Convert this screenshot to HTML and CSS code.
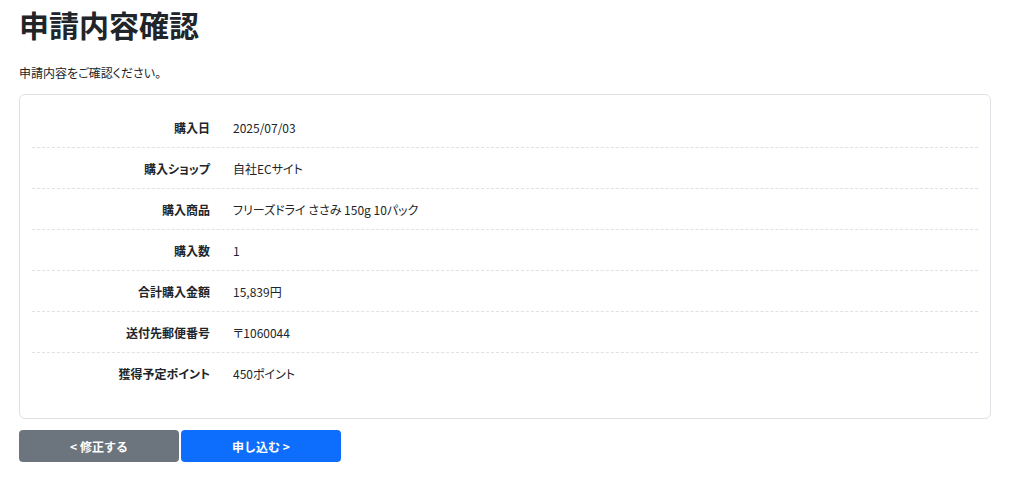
FILE: index.html
```html
<!DOCTYPE html>
<html lang="ja">
<head>
<meta charset="utf-8">
<title>申請内容確認</title>
<link rel="stylesheet" href="styles.css">
</head>
<body>
<main class="page">
  <h1 class="title">申請内容確認</h1>
  <p class="lead">申請内容をご確認ください。</p>
  <section class="card">
    <dl class="rows">
      <div class="row"><dt>購入日</dt><dd>2025/07/03</dd></div>
      <div class="row"><dt>購入ショップ</dt><dd>自社ECサイト</dd></div>
      <div class="row"><dt>購入商品</dt><dd>フリーズドライ ささみ 150g 10パック</dd></div>
      <div class="row"><dt>購入数</dt><dd>1</dd></div>
      <div class="row"><dt>合計購入金額</dt><dd>15,839円</dd></div>
      <div class="row"><dt>送付先郵便番号</dt><dd>〒1060044</dd></div>
      <div class="row"><dt>獲得予定ポイント</dt><dd>450ポイント</dd></div>
    </dl>
  </section>
  <div class="actions">
    <button class="btn btn-back" type="button">&lt; 修正する</button>
    <button class="btn btn-submit" type="button">申し込む &gt;</button>
  </div>
</main>
</body>
</html>
```

FILE: styles.css
```css
* { box-sizing: border-box; }
html, body { margin: 0; background: #fff; }
body {
  font-family: "Noto Sans CJK JP", "Noto Sans", sans-serif;
  color: #212529;
  font-size: 12px;
}
.page { padding: 0 19px; }
.title {
  margin: 0;
  padding-top: 6px;
  font-size: 30px;
  line-height: 36px;
  font-weight: 700;
  color: #212529;
}
.lead {
  margin: 22px 0 0;
  font-size: 12px;
  line-height: 18px;
  font-feature-settings: "palt";
}
.card {
  margin-top: 12px;
  border: 1px solid #dee2e6;
  border-radius: 6px;
  padding: 12px 12px 24px;
}
.rows { margin: 0; }
.row {
  display: flex;
  align-items: center;
  height: 41px;
  border-bottom: 1px dashed #dee2e6;
}
.row:last-child { border-bottom: none; }
.row dt {
  width: 178px;
  text-align: right;
  font-weight: 700;
  font-feature-settings: "palt";
}
.row dd {
  margin: 0;
  padding-left: 23px;
  font-feature-settings: "palt";
}
.actions {
  display: flex;
  gap: 2px;
  margin-top: 11px;
}
.btn {
  width: 160px;
  height: 32px;
  border: none;
  border-radius: 4px;
  color: #fff;
  font-family: inherit;
  font-size: 12px;
  font-weight: 700;
  cursor: pointer;
}
.btn-back { background: #6c757d; }
.btn-submit { background: #0d6efd; }
```
